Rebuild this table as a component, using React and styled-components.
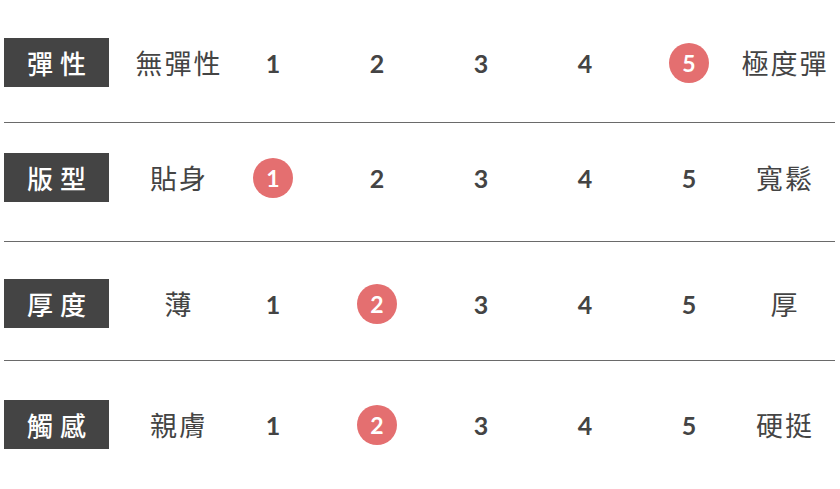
import React from 'react'
import styled, { createGlobalStyle } from 'styled-components'

const GlobalStyle = createGlobalStyle`
    body {
        margin: 0;
        background: #ffffff;
        font-family: "Noto Sans CJK TC", "Noto Sans", sans-serif;
    }
`;

// pt / pb: spacing above and below each row's content
const rows = [
    { label: '彈性', low: '無彈性', high: '極度彈', value: 5, pt: 38, pb: 35 },
    { label: '版型', low: '貼身', high: '寬鬆', value: 1, pt: 30, pb: 39 },
    { label: '厚度', low: '薄', high: '厚', value: 2, pt: 37, pb: 32 },
    { label: '觸感', low: '親膚', high: '硬挺', value: 2, pt: 39, pb: 30 },
];

const App = () => {
    return (
        <>
            <GlobalStyle />
            <Table>
                {rows.map((row, i) => (
                    <Row key={row.label} pt={row.pt} pb={row.pb} last={i === rows.length - 1}>
                        <Label>{row.label}</Label>
                        <Scale>
                            <EndText>{row.low}</EndText>
                            {[1, 2, 3, 4, 5].map(n => (
                                <Cell key={n}>
                                    {n === row.value
                                        ? <Dot>{n}</Dot>
                                        : <Num>{n}</Num>}
                                </Cell>
                            ))}
                            <EndText>{row.high}</EndText>
                        </Scale>
                    </Row>
                ))}
            </Table>
        </>
    )
}

const Table = styled.div`
    width: 831px;
    margin: 0 4px;
`;

const Row = styled.div`
    display: flex;
    align-items: center;
    padding: ${p => p.pt}px 0 ${p => p.pb}px;
    border-bottom: ${p => p.last ? 'none' : '1px solid #6a6a6a'};
`;

const Label = styled.div`
    width: 105px;
    height: 49px;
    background: #444444;
    color: #ffffff;
    display: flex;
    align-items: center;
    justify-content: center;
    font-size: 26px;
    font-weight: 500;
    letter-spacing: 7px;
    text-indent: 7px;
    margin-right: 26px;
`;

const Scale = styled.div`
    display: grid;
    grid-template-columns: 86px repeat(5, 104px) 86px;
    align-items: center;
    justify-items: center;
`;

const EndText = styled.div`
    color: #444444;
    font-size: 27px;
    font-weight: 400;
    letter-spacing: 2px;
    text-indent: 2px;
    white-space: nowrap;
`;

const Cell = styled.div`
    display: flex;
    align-items: center;
    justify-content: center;
    height: 40px;
`;

const Num = styled.span`
    font-family: "Lato", "Noto Sans", sans-serif;
    font-weight: 700;
    font-size: 25px;
    color: #444444;
`;

const Dot = styled.span`
    width: 40px;
    height: 40px;
    border-radius: 50%;
    background: #e46f70;
    color: #ffffff;
    display: flex;
    align-items: center;
    justify-content: center;
    font-family: "Lato", "Noto Sans", sans-serif;
    font-weight: 700;
    font-size: 23px;
`;

export default App
